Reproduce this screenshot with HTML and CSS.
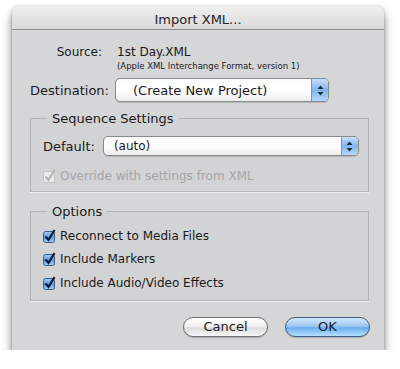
FILE: index.html
```html
<!DOCTYPE html>
<html lang="en">
<head>
  <meta charset="UTF-8" />
  <title>Import XML...</title>
  <link rel="stylesheet" href="styles.css">
</head>
<body>
  <div class="window">
    <div class="titlebar">Import XML...</div>

    <div class="sheet">
      <div class="row source-row">
        <span class="label source-label">Source:</span>
        <div class="source-value">
          <div class="file-name">1st Day.XML</div>
          <div class="file-format">(Apple XML Interchange Format, version 1)</div>
        </div>
      </div>

      <div class="row dest-row">
        <span class="label dest-label">Destination:</span>
        <div class="popup dest-popup">
          <span class="popup-text">(Create New Project)</span>
          <span class="popup-arrows">
            <svg width="7" height="11" viewBox="0 0 7 11"><path d="M3.5 0.5 L6.5 4 L0.5 4 Z M3.5 10.5 L6.5 7 L0.5 7 Z" fill="#1b2a3c"/></svg>
          </span>
        </div>
      </div>

      <fieldset class="group seq-group">
        <legend>Sequence Settings</legend>
        <div class="row default-row">
          <span class="label">Default:</span>
          <div class="popup default-popup">
            <span class="popup-text">(auto)</span>
            <span class="popup-arrows">
              <svg width="7" height="11" viewBox="0 0 7 11"><path d="M3.5 0.5 L6.5 4 L0.5 4 Z M3.5 10.5 L6.5 7 L0.5 7 Z" fill="#1b2a3c"/></svg>
            </span>
          </div>
        </div>
        <div class="check disabled">
          <svg class="box" width="14" height="14" viewBox="0 0 14 14">
            <rect x="0.5" y="2.5" width="11" height="11" rx="2" fill="#ececec" stroke="#c4c4c4"/>
            <path d="M2.5 7.5 L5.5 11 L11.5 1" fill="none" stroke="#b4b4b4" stroke-width="2.2"/>
          </svg>
          <span>Override with settings from XML</span>
        </div>
      </fieldset>

      <fieldset class="group opt-group">
        <legend>Options</legend>
        <div class="check">
          <svg class="box" width="14" height="14" viewBox="0 0 14 14">
            <defs>
              <linearGradient id="aqua" x1="0" y1="0" x2="0" y2="1">
                <stop offset="0" stop-color="#a9cdf3"/>
                <stop offset="0.5" stop-color="#5c9ee6"/>
                <stop offset="1" stop-color="#9fd0fb"/>
              </linearGradient>
            </defs>
            <rect x="0.5" y="2.5" width="11" height="11" rx="2" fill="url(#aqua)" stroke="#3f5c80"/>
            <path d="M2.5 7.5 L5.5 11 L11.5 1" fill="none" stroke="#0c1a33" stroke-width="2.2"/>
          </svg>
          <span>Reconnect to Media Files</span>
        </div>
        <div class="check">
          <svg class="box" width="14" height="14" viewBox="0 0 14 14">
            <rect x="0.5" y="2.5" width="11" height="11" rx="2" fill="url(#aqua)" stroke="#3f5c80"/>
            <path d="M2.5 7.5 L5.5 11 L11.5 1" fill="none" stroke="#0c1a33" stroke-width="2.2"/>
          </svg>
          <span>Include Markers</span>
        </div>
        <div class="check">
          <svg class="box" width="14" height="14" viewBox="0 0 14 14">
            <rect x="0.5" y="2.5" width="11" height="11" rx="2" fill="url(#aqua)" stroke="#3f5c80"/>
            <path d="M2.5 7.5 L5.5 11 L11.5 1" fill="none" stroke="#0c1a33" stroke-width="2.2"/>
          </svg>
          <span>Include Audio/Video Effects</span>
        </div>
      </fieldset>

      <div class="buttons">
        <button class="btn">Cancel</button>
        <button class="btn default">OK</button>
      </div>
    </div>
  </div>
</body>
</html>
```

FILE: styles.css
```css
body {
  margin: 0;
  padding: 6px 16px 0 12px;
  background: #fff;
  font-family: "DejaVu Sans", sans-serif;
  font-size: 12px;
  color: #1a1a1a;
}
.window {
  width: 372px;
  height: 344px;
  background: #d5d6d8;
  border-radius: 6px 6px 0 0;
  box-shadow: 0 7px 10px rgba(0,0,0,0.5), 0 0 3px rgba(0,0,0,0.2);
  overflow: hidden;
}
.titlebar {
  height: 19px;
  padding-top: 4px;
  line-height: 20px;
  text-align: center;
  font-size: 13px;
  color: #222;
  background: linear-gradient(#f0f0f0, #d9d9d9);
  border-bottom: 1px solid #8f8f8f;
}
.sheet {
  padding: 15px 14px 0 18px;
}
.row {
  display: flex;
  align-items: center;
}
.label {
  text-align: right;
}
.source-row {
  align-items: flex-start;
}
.source-label {
  width: 72px;
  margin-right: 15px;
}
.file-name {
  font-size: 12px;
}
.file-format {
  font-size: 8.5px;
  margin-top: 2px;
}
.dest-row {
  margin-top: 7px;
}
.dest-label {
  width: 78px;
  margin-right: 7px;
  font-size: 13px;
}
.popup {
  display: flex;
  align-items: center;
  background: linear-gradient(#fbfbfb, #fff 50%, #ececec);
  border: 1px solid #8a8a8a;
  border-radius: 5px;
  box-shadow: 0 1px 1px rgba(0,0,0,0.15);
  overflow: hidden;
}
.popup-text {
  flex: 1;
  padding-left: 17px;
}
.popup-arrows {
  width: 16px;
  align-self: stretch;
  display: flex;
  align-items: center;
  justify-content: center;
  background: linear-gradient(#c6e0fa, #7fb5ec 50%, #b4dafb);
  border-left: 1px solid #7b95b4;
}
.dest-popup {
  width: 212px;
  height: 22px;
  font-size: 13px;
}
.group {
  margin: 0;
  padding: 0 0 0 12px;
  width: 325px;
  border: 1px solid #b3b4b6;
  box-shadow: 0 1px 0 rgba(255,255,255,0.6);
  background: #d2d3d5;
}
.group legend {
  padding: 0 5px;
  margin-left: 4px;
  font-size: 13px;
}
.seq-group {
  margin-top: 9px;
  padding-bottom: 8px;
}
.default-row {
  margin-top: 10px;
}
.default-row .label {
  font-size: 13px;
  margin-right: 8px;
}
.default-popup {
  width: 254px;
  height: 18px;
}
.default-popup .popup-text {
  padding-left: 10px;
}
.check {
  display: flex;
  align-items: center;
  font-size: 12px;
  margin-top: 13px;
}
.check .box {
  margin-right: 3px;
}
.check.disabled {
  color: #a5a5a7;
}
.opt-group {
  margin-top: 12px;
  padding-bottom: 5px;
}
.opt-group .check {
  margin-top: 0;
  height: 23.5px;
}
.opt-group legend + .check {
  margin-top: 5px;
}
.buttons {
  display: flex;
  justify-content: flex-end;
  gap: 17px;
  margin-top: 16px;
}
.btn {
  width: 85px;
  height: 20px;
  border-radius: 10px;
  font-family: "DejaVu Sans", sans-serif;
  font-size: 13px;
  color: #1a1a1a;
  border: 1px solid #6e6e6e;
  background: linear-gradient(#ffffff, #f2f2f2 45%, #dcdcdc 55%, #f6f6f6);
  box-shadow: 0 1px 1px rgba(0,0,0,0.2);
  padding: 0;
}
.btn.default {
  border-color: #3d5d86;
  background: linear-gradient(#d3e7fb, #9cc8f2 45%, #6aaef0 55%, #b6e0fd);
}
```
